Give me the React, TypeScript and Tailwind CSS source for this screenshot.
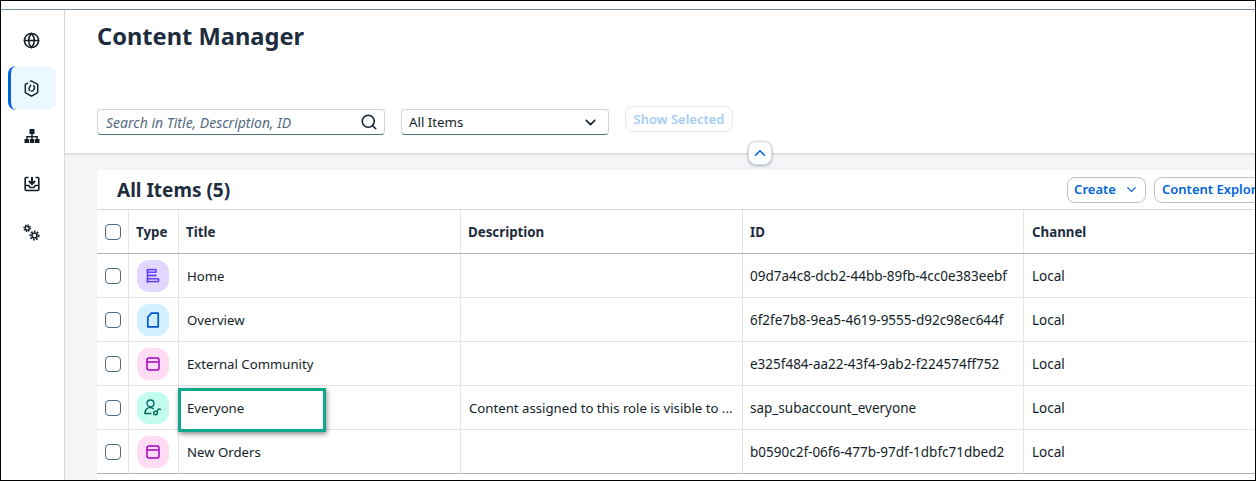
import { ChevronDown, ChevronUp, Globe, Search } from "lucide-react";
import type { ReactNode } from "react";

const font = { fontFamily: '"Noto Sans", sans-serif' };

function NavHexagon() {
  return (
    <svg width="15" height="17" viewBox="0 0 15 17" fill="none" stroke="#131e29" strokeWidth="1.400">
      <path d="M5.800 1.500 7.500.9l6.200 3.500v8.200l-6.200 3.500-6.200-3.500V4.400L4 2.900" />
      <path d="M9.300 5.200c1.200 1 1.500 3 .6 4.400-.7 1.100-2 1.700-3.200 1.500" />
      <path d="M5.600 11 4.900 8.500 7 4.600" />
    </svg>
  );
}

function NavTree() {
  return (
    <svg width="16" height="16" viewBox="0 0 16 16" fill="#131e29">
      <rect x="5.500" y="1" width="5" height="5" />
      <rect x="7.300" y="6" width="1.400" height="2.500" />
      <rect x="2.300" y="8" width="11.400" height="1.400" />
      <rect x="2.300" y="8" width="1.400" height="3" />
      <rect x="12.300" y="8" width="1.400" height="3" />
      <rect x="7.300" y="8" width="1.400" height="3" />
      <rect x="0.500" y="11" width="4.500" height="4" />
      <rect x="5.800" y="11" width="4.500" height="4" />
      <rect x="11" y="11" width="4.500" height="4" />
    </svg>
  );
}

function NavInbox() {
  return (
    <svg width="16" height="16" viewBox="0 0 16 16" fill="none" stroke="#131e29" strokeWidth="1.600">
      <path d="M4.500 1.500H2.200a1 1 0 0 0-1 1v11a1 1 0 0 0 1 1h11.600a1 1 0 0 0 1-1v-11a1 1 0 0 0-1-1h-2.300" />
      <path d="M1.200 9.500h3.600l1.400 2h3.600l1.400-2h3.600" />
      <path d="M8 1v6.500M5 5l3 3 3-3" strokeWidth="2" />
    </svg>
  );
}

function NavGears() {
  return (
    <svg width="17" height="17" viewBox="0 0 17 17" fill="none" stroke="#131e29">
      <circle cx="4.200" cy="4.200" r="2" strokeWidth="1.400" />
      <circle cx="4.200" cy="4.200" r="3.200" strokeWidth="1.300" strokeDasharray="1.400 1.100" />
      <circle cx="11.500" cy="11.500" r="2.500" strokeWidth="1.600" />
      <circle cx="11.500" cy="11.500" r="4.200" strokeWidth="1.700" strokeDasharray="1.700 1.400" />
    </svg>
  );
}

function PageIcon() {
  return (
    <svg width="16" height="16" viewBox="0 0 16 16" fill="none" stroke="#5d36ff" strokeWidth="1.400">
      <path d="M2.500 1v14" />
      <rect x="2.500" y="1.600" width="8.500" height="2.600" />
      <path d="M2.500 7.500h9" strokeWidth="1.700" />
      <rect x="2.500" y="10.800" width="11" height="2.800" />
    </svg>
  );
}

function DocIcon() {
  return (
    <svg width="16" height="16" viewBox="0 0 16 16" fill="none" stroke="#0057d2" strokeWidth="1.700">
      <path d="M6.500 1.200H13.200V14.800H2.800V5.200L6.500 1.200Z" strokeLinejoin="round" />
    </svg>
  );
}

function AppIcon() {
  return (
    <svg width="16" height="16" viewBox="0 0 16 16" fill="none" stroke="#a100c2" strokeWidth="1.500">
      <rect x="2" y="2" width="12" height="12" rx="2" />
      <path d="M2 6h12" />
    </svg>
  );
}

function RoleIcon() {
  return (
    <svg width="18" height="17" viewBox="0 0 18 17" fill="none" stroke="#046c5e" strokeWidth="1.400">
      <circle cx="6.500" cy="4.400" r="3.400" />
      <path d="M1 14.500c0-3.600 2-5.900 5-5.900 1.400 0 2.500.4 3.300 1.100" strokeLinecap="round" />
      <path d="M1 14.500h6" strokeLinecap="round" />
      <circle cx="11.500" cy="14" r="1.800" />
      <path d="M13 12.800 14 10.500C14.500 9.600 15.800 9.600 16.400 10.500" strokeLinecap="round" />
    </svg>
  );
}

const rows = [
  { title: "Home", description: "", id: "09d7a4c8-dcb2-44bb-89fb-4cc0e383eebf", bg: "bg-[#e2d8ff]", icon: <PageIcon /> },
  { title: "Overview", description: "", id: "6f2fe7b8-9ea5-4619-9555-d92c98ec644f", bg: "bg-[#d1efff]", icon: <DocIcon /> },
  { title: "External Community", description: "", id: "e325f484-aa22-43f4-9ab2-f224574ff752", bg: "bg-[#ffdcf3]", icon: <AppIcon /> },
  { title: "Everyone", description: "Content assigned to this role is visible to ...", id: "sap_subaccount_everyone", bg: "bg-[#c2fcee]", icon: <RoleIcon /> },
  { title: "New Orders", description: "", id: "b0590c2f-06f6-477b-97df-1dbfc71dbed2", bg: "bg-[#ffdcf3]", icon: <AppIcon /> },
];

function NavItem({ children, active }: { children: ReactNode; active?: boolean }) {
  return (
    <div
      className={`flex h-11 w-12 items-center justify-center rounded-lg pr-[1px] ${
        active ? "border-l-[3px] border-[#0064d9] bg-[#ebf8ff] pr-[4px]" : ""
      }`}
    >
      {children}
    </div>
  );
}

function Checkbox() {
  return <div className="h-4 w-4 rounded-[4px] border border-[#556b82] bg-white" />;
}

export default function App() {
  return (
    <div
      className="relative flex h-[481px] w-[1256px] flex-col overflow-hidden border border-black bg-white text-[#131e29]"
      style={font}
    >
      <div className="h-[9px] shrink-0 border-b border-[#758ca4]" />
      <div className="flex min-h-0 flex-1">
        <nav className="flex w-[64px] shrink-0 flex-col items-start gap-1 border-r border-[#d9d9d9] pt-[8px] pl-[7px]">
          <NavItem>
            <Globe size={17} strokeWidth={2.2} color="#131e29" />
          </NavItem>
          <NavItem active>
            <NavHexagon />
          </NavItem>
          <NavItem>
            <NavTree />
          </NavItem>
          <NavItem>
            <NavInbox />
          </NavItem>
          <NavItem>
            <NavGears />
          </NavItem>
        </nav>

        <main className="flex min-w-0 flex-1 flex-col bg-[#f3f5f7]">
          <header className="relative h-[144px] shrink-0 border-b border-[#d9d9d9] bg-white pl-[32px] shadow-[0_1px_2px_rgba(34,53,72,0.08)]">
            <h1 className="pt-[8px] text-[23.650px] leading-[36px] font-bold text-[#1d2d3e]">Content Manager</h1>
            <div className="mt-[46px] flex items-start">
              <div className="mt-[9px] flex h-[26px] w-[288px] items-center justify-between rounded-[4px] border border-[#d0d6dc] border-b-[#556b82] pr-[6px] pl-2">
                <span className="text-[14px] text-[#556b82] italic">Search in Title, Description, ID</span>
                <Search size={18} strokeWidth={2} color="#131e29" />
              </div>
              <div className="mt-[9px] ml-4 flex h-[26px] w-[208px] items-center justify-between rounded-[4px] border border-[#d0d6dc] border-b-[#556b82] pr-[9px] pl-[7px]">
                <span className="pt-[2px] text-[13.300px]">All Items</span>
                <ChevronDown size={17} strokeWidth={2.2} color="#131e29" />
              </div>
              <div className="mt-[6px] ml-4 flex h-[26px] w-[108px] items-center justify-center rounded-lg border border-[#e6e9ec] pt-[2px] text-[13px] font-semibold text-[#a6cdf5]">
                Show Selected
              </div>
            </div>
            <div className="absolute top-[131px] left-[683px] flex h-6 w-6 items-center justify-center rounded-lg border border-[#d0d6dc] bg-white shadow-[0_1px_3px_rgba(34,53,72,0.35)]">
              <ChevronUp size={18} strokeWidth={2} color="#0064d9" />
            </div>
          </header>

          <section className="mt-[16px] ml-[32px] flex min-h-0 flex-1 flex-col bg-white">
            <div className="flex h-[40px] shrink-0 items-center border-b border-[#d9d9d9] pl-[20px]">
              <h2 className="pt-[2px] text-[19px] font-bold text-[#1d2d3e]">All Items (5)</h2>
              <div className="ml-auto flex w-[188px] shrink-0 gap-2 overflow-hidden">
                <div className="flex h-[26px] w-[79px] shrink-0 items-center justify-center gap-2 rounded-lg border border-[#bcc3ca] text-[13px] font-semibold text-[#0064d9]">
                  Create
                  <ChevronDown size={15} strokeWidth={2} />
                </div>
                <div className="flex h-[26px] shrink-0 items-center rounded-lg border border-[#bcc3ca] px-[7px] text-[13px] font-semibold whitespace-nowrap text-[#0064d9]">
                  Content Explorer
                </div>
              </div>
            </div>

            <div className="grid h-[44px] shrink-0 grid-cols-[32px_50px_282px_282px_281px_1fr] border-b border-[#a9b4be] text-[13.300px] font-bold text-[#1d2d3e]">
              <div className="flex items-center border-r border-[#e5e5e5] pl-2">
                <Checkbox />
              </div>
              <div className="flex items-center border-r border-[#e5e5e5] pt-[2px] pl-[7px]">Type</div>
              <div className="flex items-center border-r border-[#e5e5e5] pt-[2px] pl-[7px]">Title</div>
              <div className="flex items-center border-r border-[#e5e5e5] pt-[2px] pl-[7px]">Description</div>
              <div className="flex items-center border-r border-[#e5e5e5] pt-[2px] pl-[7px]">ID</div>
              <div className="flex items-center pt-[2px] pl-2">Channel</div>
            </div>

            {rows.map((row, i) => (
              <div
                key={row.title}
                className={`grid h-[44px] shrink-0 grid-cols-[32px_50px_282px_282px_281px_1fr] text-[13.200px] ${
                  i === rows.length - 1 ? "border-b border-[#a9b4be]" : "border-b border-[#e5e5e5]"
                }`}
              >
                <div className="flex items-center border-r border-[#e5e5e5] pl-2">
                  <Checkbox />
                </div>
                <div className="flex items-center border-r border-[#e5e5e5] pl-2">
                  <div className={`flex h-8 w-8 items-center justify-center rounded-xl ${row.bg}`}>{row.icon}</div>
                </div>
                <div className="relative flex items-center border-r border-[#e5e5e5] pt-[2px] pl-2">
                  {row.title}
                  {row.title === "Everyone" && (
                    <div className="absolute top-[2px] -left-[1px] h-[44px] w-[148px] border-[3px] border-[#0fa88c] shadow-[1px_2px_5px_rgba(0,0,0,0.45)]" />
                  )}
                </div>
                <div className="flex items-center border-r border-[#e5e5e5] pt-[2px] pl-2 whitespace-nowrap">{row.description}</div>
                <div className="flex items-center border-r border-[#e5e5e5] pt-[2px] pl-[7px] text-[13.500px] whitespace-nowrap">{row.id}</div>
                <div className="flex items-center pt-[2px] pl-2 text-[13.500px]">Local</div>
              </div>
            ))}
          </section>
        </main>
      </div>
    </div>
  );
}
